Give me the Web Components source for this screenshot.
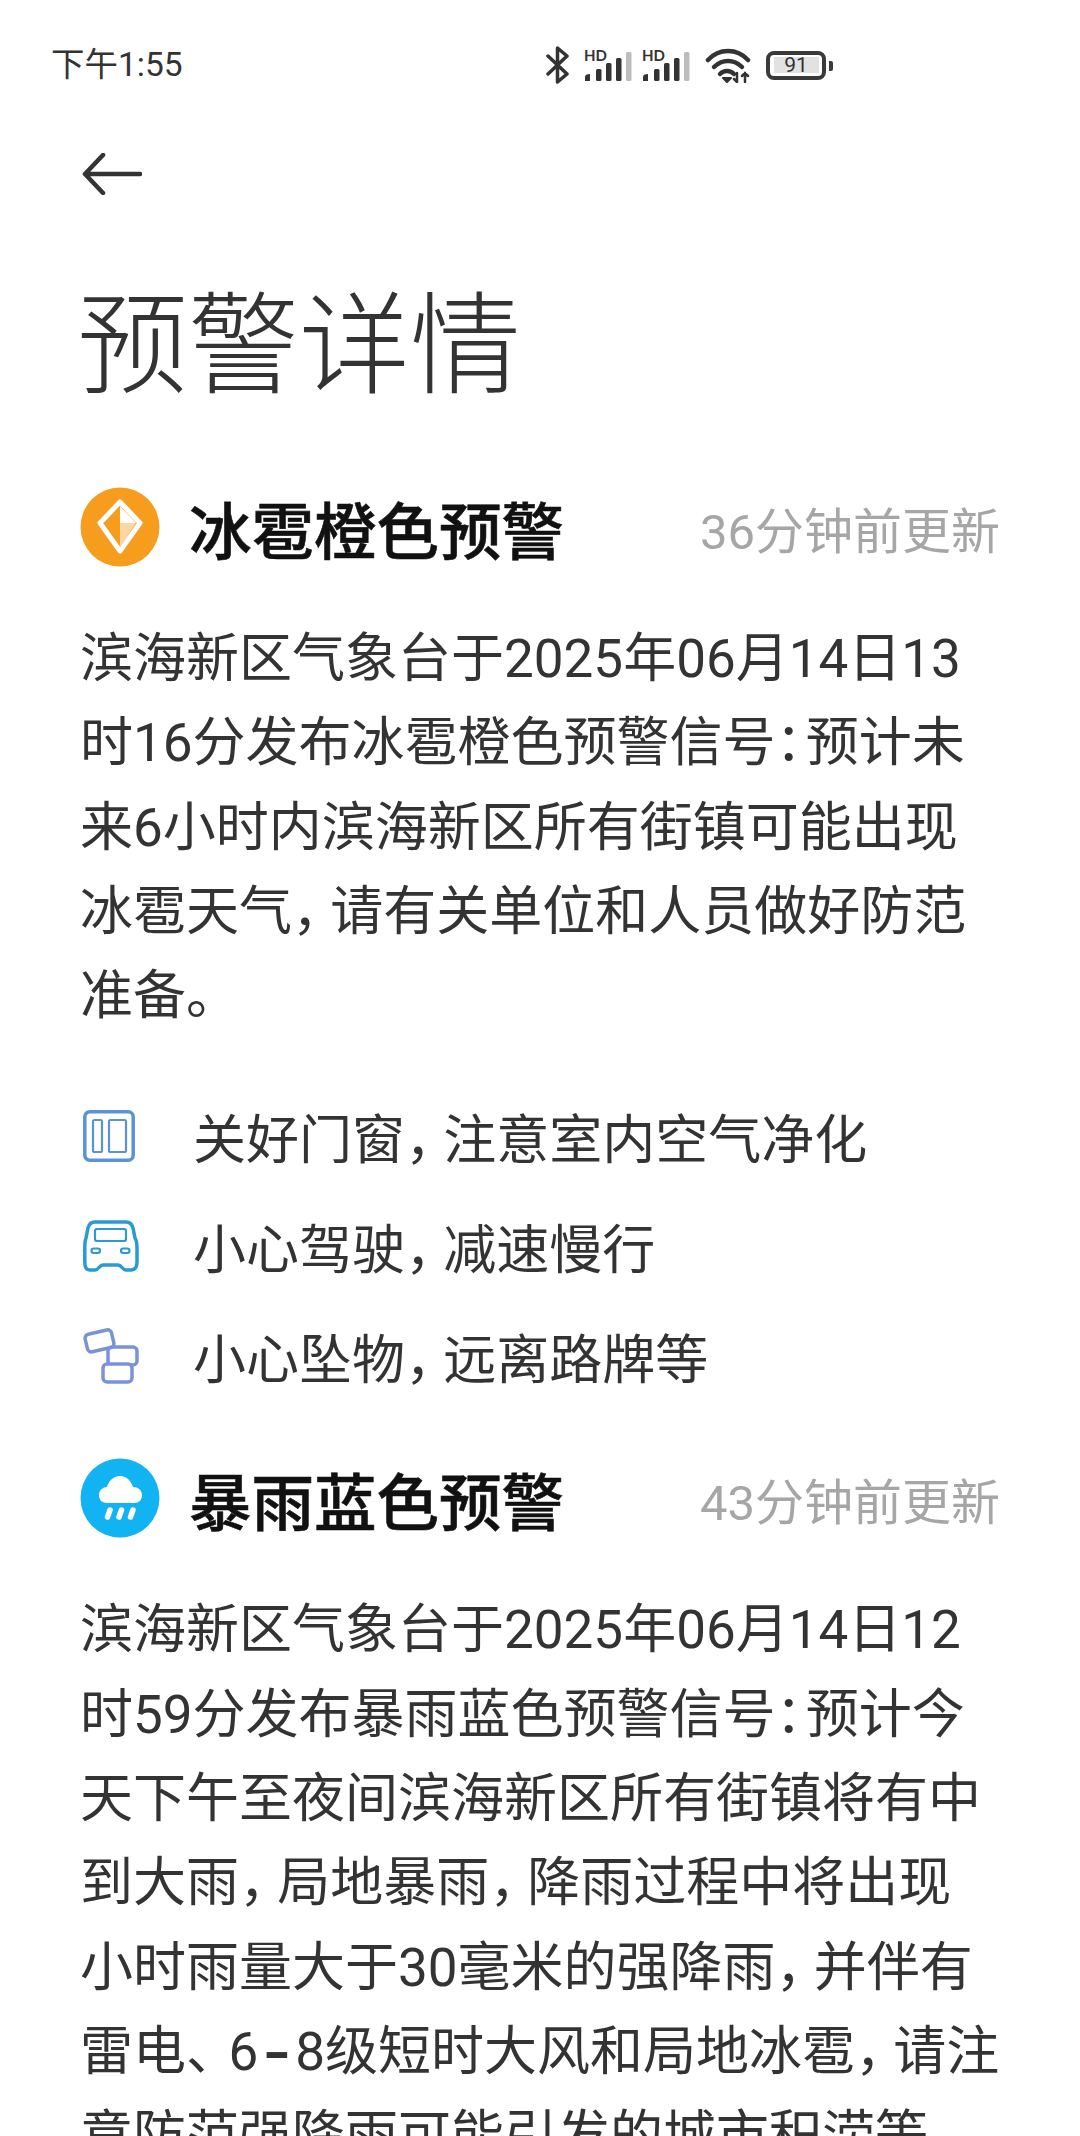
<!DOCTYPE html>
<html lang="zh-CN">
<head>
<meta charset="utf-8">
<title>预警详情</title>
<style>
    html, body { margin: 0; height: 2136px; overflow: hidden; background: #fff; }
    body { font-family: Roboto, "Noto Sans CJK SC", sans-serif; color: #333; }
    /* punctuation and the dash are set tighter or wider than the font's default */
    .comma { letter-spacing: -0.28em; }
    .colon { letter-spacing: -0.43em; }
    .mark { letter-spacing: -0.2em; }
    .dash { display: inline-block; margin: 0 0.18em; font-weight: 500; transform: scale(1.5, 1.2); }
</style>
</head>
<body>

<weather-page>
    <status-bar time="下午1:55" battery="91"></status-bar>
    <page-header title="预警详情"></page-header>

    <alert-section title="冰雹橙色预警" updated="36分钟前更新">
        <svg slot="icon" viewBox="0 0 80 80" width="80" height="80">
            <circle cx="40" cy="40" r="39.500" fill="#f79d1e"/>
            <path d="M40 15 L60 36 L40 64 L20 36 Z" fill="#f79d1e" stroke="#fff" stroke-width="5" stroke-linejoin="round"/>
            <path d="M40 19 L56 36 H40 Z" fill="#fff"/>
            <path d="M40 36 H56 L40 60 Z" fill="#fbd7a6"/>
        </svg>
        <p>滨海新区气象台于2025年06月14日13<br>时16分发布冰雹橙色预警信号<span class="colon">：</span>预计未<br>来6小时内滨海新区所有街镇可能出现<br>冰雹天气<span class="comma">，</span>请有关单位和人员做好防范<br>准备。</p>
        <tip-row slot="tips">
            <svg slot="icon" viewBox="0 0 52 52" width="52" height="52" fill="none" stroke="#5b93d6">
                <rect x="1.800" y="1.800" width="48.400" height="48.400" rx="5" stroke-width="3.500"/>
                <rect x="10" y="10" width="9" height="32" rx="1.500" stroke-width="2.200"/>
                <rect x="26" y="10" width="17" height="32" rx="1.500" stroke-width="2.200"/>
            </svg>
            关好门窗<span class="comma">，</span>注意室内空气净化
        </tip-row>
        <tip-row slot="tips">
            <svg slot="icon" viewBox="0 0 56 52" width="56" height="52" fill="none" stroke="#2a9ad3">
                <path d="M12 2 H43 C47 2 49 4 50 8 L52 18 C54 21 54 24 54 28 V42 C54 47 52 50 48 50 H43 C39 50 39 45 35 45 H20 C16 45 16 50 12 50 H7 C3 50 1.800 47 1.800 42 V28 C1.800 24 1.800 21 3 18 L5 8 C6 4 8 2 12 2 Z" stroke-width="3.500"/>
                <rect x="12" y="9" width="31" height="12" rx="2" stroke-width="2.200"/>
                <rect x="8.500" y="28.500" width="8.500" height="4.500" rx="2.200" stroke-width="2.200"/>
                <rect x="38" y="28.500" width="8.500" height="4.500" rx="2.200" stroke-width="2.200"/>
            </svg>
            小心驾驶<span class="comma">，</span>减速慢行
        </tip-row>
        <tip-row slot="tips">
            <svg slot="icon" viewBox="0 0 56 56" width="56" height="56" fill="none" stroke="#7a93d8" stroke-width="3.500">
                <rect x="3" y="4" width="27" height="18" rx="4" transform="rotate(-13 16 13)"/>
                <rect x="25" y="19" width="29" height="18" rx="4"/>
                <rect x="20" y="36" width="29" height="18" rx="4" fill="#fff"/>
            </svg>
            小心坠物<span class="comma">，</span>远离路牌等
        </tip-row>
    </alert-section>

    <alert-section title="暴雨蓝色预警" updated="43分钟前更新">
        <svg slot="icon" viewBox="0 0 80 80" width="80" height="80">
            <circle cx="40" cy="40" r="39.500" fill="#12b3f3"/>
            <path d="M27 45 C21 45 19 41 19 37 C19 32 23 29 27 29 C29 22 34 18 40 18 C47 18 51 23 53 29 C58 29 62 32 62 37 C62 42 59 45 54 45 Z" fill="#fff"/>
            <path d="M30 52 L27.500 59 M41.500 52 L39 59 M53 52 L50.500 59" stroke="#fff" stroke-width="5.500" stroke-linecap="round" fill="none"/>
        </svg>
        <p>滨海新区气象台于2025年06月14日12<br>时59分发布暴雨蓝色预警信号<span class="colon">：</span>预计今<br>天下午至夜间滨海新区所有街镇将有中<br>到大雨<span class="comma">，</span>局地暴雨<span class="comma">，</span>降雨过程中将出现<br>小时雨量大于30毫米的强降雨<span class="comma">，</span>并伴有<br>雷电<span class="mark">、</span>6<span class="dash">-</span>8级短时大风和局地冰雹<span class="comma">，</span>请注<br>意防范强降雨可能引发的城市积涝等</p>
    </alert-section>
</weather-page>

<script>
class WeatherPage extends HTMLElement {
    constructor() {
        super();
        this.attachShadow({ mode: 'open' });
        this.shadowRoot.innerHTML = `
            <style>
                :host { display: block; width: 1080px; }
            </style>
            <slot></slot>
        `;
    }
}

class StatusBar extends HTMLElement {
    constructor() {
        super();
        this.attachShadow({ mode: 'open' });
    }

    signal() {
        return `
            <span class="signal">
                <b>HD</b>
                <svg viewBox="0 0 48 31" width="48" height="31">
                    <path d="M1 31 V27 Q1 24 6 24 V31 Z" fill="#333"/>
                    <rect x="12" y="19" width="5.500" height="12" rx="1.500" fill="#333"/>
                    <rect x="22" y="13" width="5.500" height="18" rx="1.500" fill="#333"/>
                    <rect x="32" y="8" width="5.500" height="23" rx="1.500" fill="#333"/>
                    <rect x="42" y="2" width="5.500" height="29" rx="1.500" fill="#bdbdbd"/>
                </svg>
            </span>`;
    }

    connectedCallback() {
        this.shadowRoot.innerHTML = `
            <style>
                :host {
                    display: flex;
                    align-items: center;
                    justify-content: space-between;
                    height: 38px;
                    padding: 46px 254px 0 51px;
                    color: #333;
                }
                .time { font-size: 33.5px; line-height: 38px; }
                .icons { display: flex; align-items: center; gap: 15px; }
                .signal { position: relative; display: block; width: 48px; height: 31px; }
                .signal + .signal { margin-left: -5px; }
                .signal b {
                    position: absolute;
                    left: 0;
                    top: -2px;
                    font: 700 15px/14px Lato, sans-serif;
                }
                svg { display: block; }
                .battery {
                    display: flex;
                    align-items: center;
                    justify-content: center;
                    box-sizing: border-box;
                    width: 60px;
                    height: 29px;
                    border: 4px solid #3a3a3a;
                    border-radius: 8px;
                    position: relative;
                }
                .level {
                    display: block;
                    width: 45px;
                    height: 16px;
                    background: #e2e2e2;
                    text-align: center;
                    font: 400 21px/17px Roboto, sans-serif;
                }
                .battery::after {
                    content: "";
                    position: absolute;
                    right: -11px;
                    top: 6px;
                    width: 4px;
                    height: 10px;
                    background: #3a3a3a;
                    border-radius: 0 2px 2px 0;
                }
            </style>
            <span class="time">${this.getAttribute('time')}</span>
            <div class="icons">
                <svg viewBox="0 0 23 38" width="23" height="38" fill="none" stroke="#333" stroke-width="3.500" stroke-linejoin="round" stroke-linecap="round">
                    <path d="M2 10 L21 28 L11.500 36 V2 L21 10 L2 28"/>
                </svg>
                ${this.signal()}
                ${this.signal()}
                <svg viewBox="0 0 46 35" width="46" height="35" fill="none" stroke="#333" stroke-width="4.500" stroke-linecap="round">
                    <path d="M3 12 C14 0 32 0 43 12"/>
                    <path d="M9 19 C17 11 29 11 37 19"/>
                    <path d="M15 26 C19 22 25 22 29 26"/>
                    <path d="M18 30 L22 34 L26 30 Z" fill="#333" stroke-width="2" stroke-linejoin="round"/>
                    <path d="M32 25 V34 M29 31 L32 34 M40 34 V25 M37 28 L40 25 L43 28" stroke-width="2.500"/>
                </svg>
                <span class="battery"><span class="level">${this.getAttribute('battery')}</span></span>
            </div>
        `;
    }
}

class PageHeader extends HTMLElement {
    constructor() {
        super();
        this.attachShadow({ mode: 'open' });
    }

    connectedCallback() {
        this.shadowRoot.innerHTML = `
            <style>
                :host { display: block; padding: 69px 80px 23px 80px; }
                svg { display: block; margin-left: 2px; }
                h1 {
                    margin: 82px 0 0 -3px;
                    font-size: 111px;
                    line-height: 140px;
                    font-weight: 300;
                    color: #333;
                }
            </style>
            <svg viewBox="0 0 60 42" width="60" height="42" fill="none" stroke="#333" stroke-width="4.500" stroke-linecap="round" stroke-linejoin="round">
                <path d="M58 21 H3 M21 2 L3 21 L21 40"/>
            </svg>
            <h1>${this.getAttribute('title')}</h1>
        `;
    }
}

class AlertSection extends HTMLElement {
    constructor() {
        super();
        this.attachShadow({ mode: 'open' });
    }

    connectedCallback() {
        this.shadowRoot.innerHTML = `
            <style>
                :host { display: block; padding: 0 80px; margin-top: 47px; }
                .head { display: flex; align-items: center; height: 80px; }
                .name {
                    margin-left: 29px;
                    font-size: 62.500px;
                    font-weight: 500;
                    -webkit-text-stroke: 0.6px #111;
                    color: #111;
                    white-space: nowrap;
                }
                .time {
                    margin-left: auto;
                    font-size: 49px;
                    color: #a6a6a6;
                    white-space: nowrap;
                }
                .body {
                    margin-top: 50px;
                    font-size: 53px;
                    line-height: 84.3px;
                    color: #333;
                    white-space: nowrap;
                }
                ::slotted(p) { margin: 0; }
                .tips { display: block; margin-top: 43px; }
            </style>
            <div class="head">
                <slot name="icon"></slot>
                <span class="name">${this.getAttribute('title')}</span>
                <span class="time">${this.getAttribute('updated')}</span>
            </div>
            <div class="body"><slot></slot></div>
            <div class="tips"><slot name="tips"></slot></div>
        `;
    }
}

class TipRow extends HTMLElement {
    constructor() {
        super();
        this.attachShadow({ mode: 'open' });
        this.shadowRoot.innerHTML = `
            <style>
                :host {
                    display: flex;
                    align-items: center;
                    height: 110px;
                    font-size: 53px;
                    color: #333;
                    white-space: nowrap;
                }
                .icon { display: flex; width: 113px; padding-left: 3px; box-sizing: border-box; }
                .text { display: block; }
            </style>
            <span class="icon"><slot name="icon"></slot></span>
            <span class="text"><slot></slot></span>
        `;
    }
}

customElements.define('weather-page', WeatherPage);
customElements.define('status-bar', StatusBar);
customElements.define('page-header', PageHeader);
customElements.define('alert-section', AlertSection);
customElements.define('tip-row', TipRow);
</script>
</body>
</html>
